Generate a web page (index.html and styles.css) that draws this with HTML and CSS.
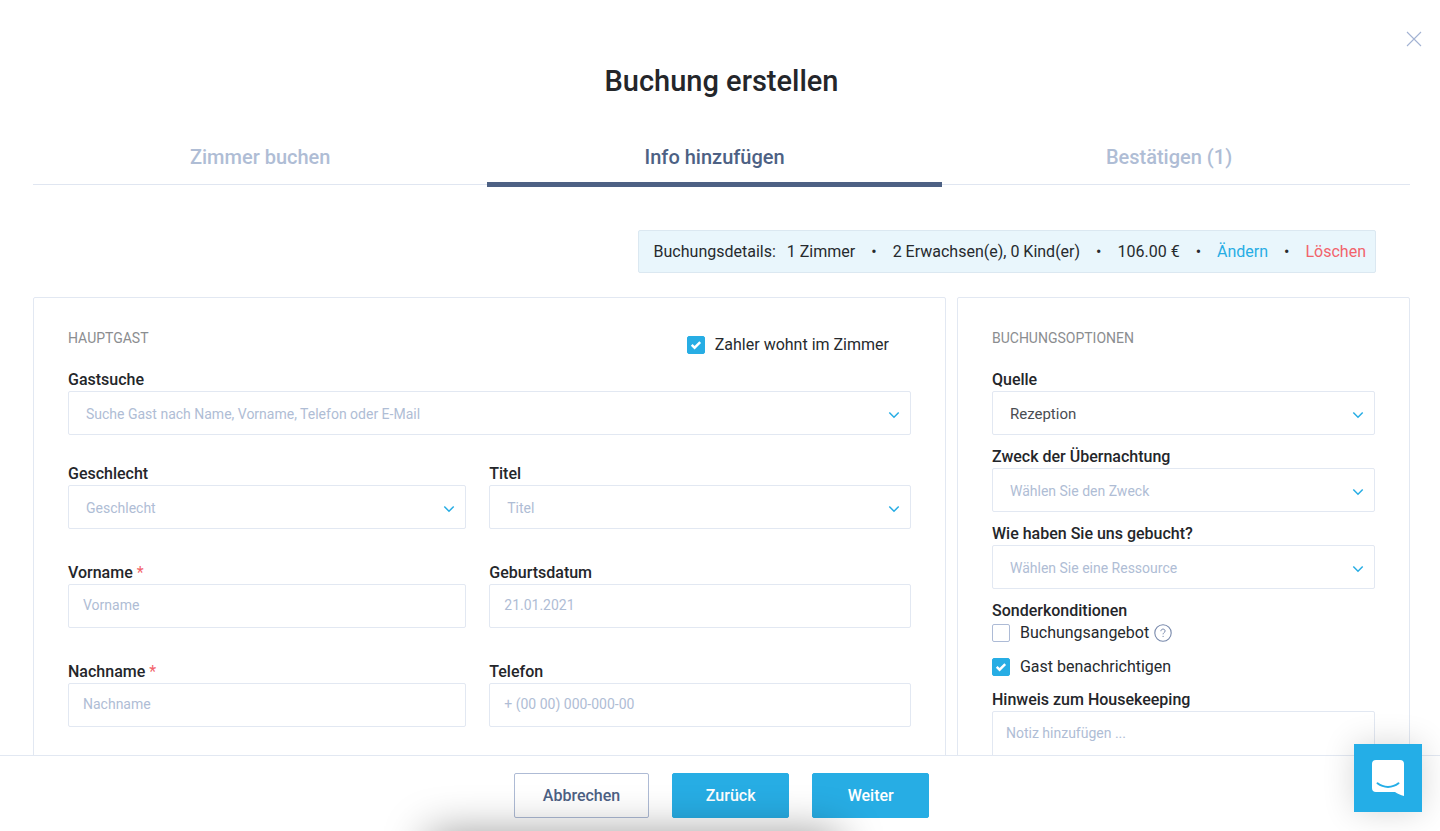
FILE: index.html
```html
<!DOCTYPE html>
<html lang="de">
<head>
<meta charset="utf-8">
<meta name="viewport" content="width=device-width, initial-scale=1">
<title>Buchung erstellen</title>
<link rel="stylesheet" href="styles.css">
</head>
<body class="page">
<main class="content">
  <button class="close" type="button" aria-label="Schließen">
    <svg width="16" height="16" viewBox="0 0 16 16" aria-hidden="true"><path d="M1 1l14 14M15 1L1 15" fill="none" stroke="#a3b3d3" stroke-width="1.1"/></svg>
  </button>
  <h1 class="title">Buchung erstellen</h1>
  <nav class="tabs">
    <a class="tab" href="#zimmer">Zimmer buchen</a>
    <a class="tab tab-active" href="#info" aria-current="step">Info hinzufügen</a>
    <a class="tab" href="#bestaetigen">Bestätigen (1)</a>
  </nav>
  <div class="summary">
    <span class="summary-label">Buchungsdetails:</span>
    <span>1 Zimmer</span>
    <span>•</span>
    <span>2 Erwachsen(e), 0 Kind(er)</span>
    <span>•</span>
    <span>106.00 €</span>
    <span>•</span>
    <a class="edit" href="#aendern">Ändern</a>
    <span>•</span>
    <a class="delete" href="#loeschen">Löschen</a>
  </div>
  <form class="panels" id="booking">
    <section class="panel guest">
      <header class="panel-head">
        <h2 class="panel-title">Hauptgast</h2>
        <label class="check payer">
          <span class="tick"><input type="checkbox" checked><svg width="18" height="18" viewBox="0 0 18 18" aria-hidden="true"><path d="M4.7 8.8l2.9 2.9 5.6-5.5"/></svg></span>
          <span>Zahler wohnt im Zimmer</span>
        </label>
      </header>
      <div class="field">
        <label for="search">Gastsuche</label>
        <span class="drop"><input class="control choice" id="search" type="text" role="combobox" aria-expanded="false" placeholder="Suche Gast nach Name, Vorname, Telefon oder E-Mail"><svg class="chevron" width="12" height="8" viewBox="0 0 12 8" aria-hidden="true"><path d="M1.3 1.5L6 6.2l4.7-4.7"/></svg></span>
      </div>
      <div class="pair pair-first">
        <div class="field">
          <label for="gender">Geschlecht</label>
          <span class="drop"><select class="control choice empty" id="gender"><option>Geschlecht</option></select><svg class="chevron" width="12" height="8" viewBox="0 0 12 8" aria-hidden="true"><path d="M1.3 1.5L6 6.2l4.7-4.7"/></svg></span>
        </div>
        <div class="field">
          <label for="honorific">Titel</label>
          <span class="drop"><select class="control choice empty" id="honorific"><option>Titel</option></select><svg class="chevron" width="12" height="8" viewBox="0 0 12 8" aria-hidden="true"><path d="M1.3 1.5L6 6.2l4.7-4.7"/></svg></span>
        </div>
      </div>
      <div class="pair">
        <div class="field">
          <label for="first">Vorname <span class="required">*</span></label>
          <input class="control entry" id="first" type="text" placeholder="Vorname">
        </div>
        <div class="field">
          <label for="birth">Geburtsdatum</label>
          <input class="control entry" id="birth" type="text" placeholder="21.01.2021">
        </div>
      </div>
      <div class="pair">
        <div class="field">
          <label for="last">Nachname <span class="required">*</span></label>
          <input class="control entry" id="last" type="text" placeholder="Nachname">
        </div>
        <div class="field">
          <label for="phone">Telefon</label>
          <input class="control entry" id="phone" type="tel" placeholder="+ (00 00) 000-000-00">
        </div>
      </div>
    </section>
    <section class="panel options">
      <header class="panel-head">
        <h2 class="panel-title">Buchungsoptionen</h2>
      </header>
      <div class="stack">
        <div class="field">
          <label for="source">Quelle</label>
          <span class="drop"><select class="control choice chosen" id="source"><option>Rezeption</option></select><svg class="chevron" width="12" height="8" viewBox="0 0 12 8" aria-hidden="true"><path d="M1.3 1.5L6 6.2l4.7-4.7"/></svg></span>
        </div>
        <div class="field">
          <label for="purpose">Zweck der Übernachtung</label>
          <span class="drop"><select class="control choice empty" id="purpose"><option>Wählen Sie den Zweck</option></select><svg class="chevron" width="12" height="8" viewBox="0 0 12 8" aria-hidden="true"><path d="M1.3 1.5L6 6.2l4.7-4.7"/></svg></span>
        </div>
        <div class="field">
          <label for="resource">Wie haben Sie uns gebucht?</label>
          <span class="drop"><select class="control choice empty" id="resource"><option>Wählen Sie eine Ressource</option></select><svg class="chevron" width="12" height="8" viewBox="0 0 12 8" aria-hidden="true"><path d="M1.3 1.5L6 6.2l4.7-4.7"/></svg></span>
        </div>
        <fieldset class="conditions">
          <legend>Sonderkonditionen</legend>
          <div class="condition-list">
            <label class="check">
              <span class="tick"><input type="checkbox"></span>
              <span>Buchungsangebot</span>
              <svg class="help" width="18" height="18" viewBox="0 0 18 18" aria-hidden="true"><circle cx="9" cy="9" r="8.2" fill="none" stroke="#7788ab" stroke-width="1.1"/><path d="M6.9 7.2c0-1.3.9-2.1 2.1-2.1s2.1.8 2.1 1.9c0 1.500-2 1.600-2 3.300M9.100 11.900v1.100" fill="none" stroke="#7788ab"/></svg>
            </label>
            <label class="check">
              <span class="tick"><input type="checkbox" checked><svg width="18" height="18" viewBox="0 0 18 18" aria-hidden="true"><path d="M4.7 8.8l2.9 2.9 5.6-5.5"/></svg></span>
              <span>Gast benachrichtigen</span>
            </label>
          </div>
        </fieldset>
        <div class="field">
          <label for="note">Hinweis zum Housekeeping</label>
          <textarea class="control note" id="note" placeholder="Notiz hinzufügen ..."></textarea>
        </div>
      </div>
    </section>
  </form>
</main>
<footer class="actions">
  <button class="btn btn-outline" type="button">Abbrechen</button>
  <button class="btn btn-primary" type="button">Zurück</button>
  <button class="btn btn-primary" type="submit" form="booking">Weiter</button>
</footer>
<button class="chat" type="button" aria-label="Chat öffnen">
  <svg width="32" height="36" viewBox="0 0 32 36" aria-hidden="true"><path d="M4 0h24a4 4 0 0 1 4 4v32c-3.500-.8-6.500-2.200-9-4H4a4 4 0 0 1-4-4V4a4 4 0 0 1 4-4z" fill="#fff"/><path d="M5.500 23.300c6.200 4.800 14.800 4.800 21 0" fill="none" stroke="#24aee7" stroke-width="2" stroke-linecap="round"/></svg>
</button>
</body>
</html>
```
FILE: styles.css
```css
* {
  box-sizing: border-box;
}

.page {
  display: flex;
  flex-direction: column;
  height: 100vh;
  margin: 0;
  overflow: hidden;
  background: #fff;
  color: #262a2e;
  font-family: Roboto, "Liberation Sans", sans-serif;
  font-size: 16px;
  line-height: 22px;
}

.page button,
.page input,
.page select,
.page textarea {
  font-family: inherit;
}

.content {
  flex: 1;
  min-height: 0;
  overflow: hidden;
  padding: 61px 30px 0 33px;
}

.close {
  position: absolute;
  top: 31px;
  right: 18px;
  display: flex;
  padding: 0;
  border: 0;
  background: none;
}

.title {
  margin: 0;
  color: #24262a;
  font-size: 29px;
  font-weight: 500;
  line-height: 40px;
  text-align: center;
}

.tabs {
  display: flex;
  margin-top: 28px;
  background: linear-gradient(#e0e6f1, #e0e6f1) 0 55px / 100% 1px no-repeat;
}

.tab {
  width: 33%;
  padding: 16px 0 13px;
  border-bottom: 5px solid transparent;
  color: #afbdd5;
  font-size: 20px;
  font-weight: 500;
  line-height: 24px;
  text-align: center;
  text-decoration: none;
}

.tab-active {
  border-color: #4d6184;
  color: #4d6184;
}

.summary {
  display: flex;
  align-items: center;
  gap: 16px;
  width: fit-content;
  margin: 43px 34px 0 auto;
  padding: 10px 9px 9px 15px;
  border: 1px solid #dbe8f1;
  border-radius: 2px;
  background: #e9f6fc;
}

.summary-label {
  margin-right: -5px;
}

.summary a {
  text-decoration: none;
}

.summary .edit {
  color: #27ade4;
}

.summary .delete {
  color: #f2636b;
}

.panels {
  display: flex;
  gap: 11px;
  margin-top: 24px;
}

.panel {
  padding: 29px 34px;
  border: 1px solid #e2e8f2;
  border-radius: 2px;
}

.guest {
  flex: 1;
}

.options {
  width: 32.9%;
}

.panel-head {
  display: flex;
  justify-content: space-between;
  min-height: 42px;
}

.panel-title {
  margin: 0;
  color: #8b8d90;
  font-size: 14px;
  font-weight: 400;
  line-height: 22px;
  text-transform: uppercase;
}

.payer {
  margin: 7px 22px 0 0;
}

.check {
  display: flex;
  align-items: center;
  gap: 10px;
  height: 22px;
}

.check .help {
  margin-left: -5px;
}

.tick,
.drop {
  display: grid;
  align-items: center;
}

.tick > *,
.drop > * {
  grid-area: 1 / 1;
}

.tick input {
  width: 18px;
  height: 18px;
  margin: 0;
  appearance: none;
  border: 1px solid #adbbd6;
  border-radius: 2px;
  background: #fff;
}

.tick input:checked {
  border-color: #27ade4;
  background: #27ade4;
}

.tick svg {
  fill: none;
  stroke: #fff;
  stroke-width: 2.4;
  pointer-events: none;
}

.field,
.stack {
  display: flex;
  flex-direction: column;
}

.stack {
  gap: 11px;
}

.field label,
.conditions legend {
  padding: 0;
  color: #24262a;
  font-weight: 500;
}

.required {
  color: #f2636b;
  font-weight: 400;
}

.control {
  width: 100%;
  height: 44px;
  margin: 0;
  appearance: none;
  border: 1px solid #e2e8f2;
  border-radius: 2px;
  outline: 0;
  background: #fff;
  color: #4a4d52;
  font-size: 14px;
}

.control::placeholder,
.empty {
  color: #afbdd5;
}

.choice {
  padding: 2px 34px 0 17px;
}

.chosen {
  font-size: 15px;
}

.entry {
  padding: 0 14px 3px;
}

.note {
  height: 100px;
  padding: 10px 13px;
  line-height: 22px;
  resize: none;
}

.chevron {
  justify-self: end;
  margin: 4px 11px 0 0;
  fill: none;
  stroke: #27ade4;
  stroke-width: 1.5;
  pointer-events: none;
}

.pair {
  display: grid;
  grid-template-columns: 17fr 18fr;
  gap: 23px;
  margin-top: 33px;
}

.pair-first {
  margin-top: 28px;
}

.conditions {
  min-width: 0;
  margin: 0;
  padding: 0;
  border: 0;
}

.condition-list {
  display: grid;
  gap: 12px;
}

.actions {
  position: relative;
  display: flex;
  justify-content: center;
  gap: 23px;
  padding: 17px 0 13px 3px;
  border-top: 1px solid #e2e8f2;
  background: #fff;
}

.actions::after {
  content: "";
  position: absolute;
  top: 100%;
  left: 30%;
  width: 28%;
  height: 40px;
  box-shadow: 0 6px 44px 4px rgba(0, 0, 0, 0.4);
  pointer-events: none;
}

.btn {
  height: 45px;
  padding: 0 32px;
  border: 1px solid #27ade4;
  border-radius: 2px;
  font-size: 16px;
  font-weight: 500;
}

.btn-outline {
  padding: 0 28px;
  border-color: #aebbd5;
  background: #fff;
  color: #4d6184;
}

.btn-primary {
  min-width: 117px;
  background: #27ade4;
  color: #fff;
}

.chat {
  position: absolute;
  right: 18px;
  bottom: 19px;
  display: flex;
  align-items: center;
  justify-content: center;
  width: 68px;
  height: 68px;
  padding: 0;
  border: 0;
  background: #24aee7;
  box-shadow: 0 0 32px rgba(0, 0, 0, 0.16);
}
```
